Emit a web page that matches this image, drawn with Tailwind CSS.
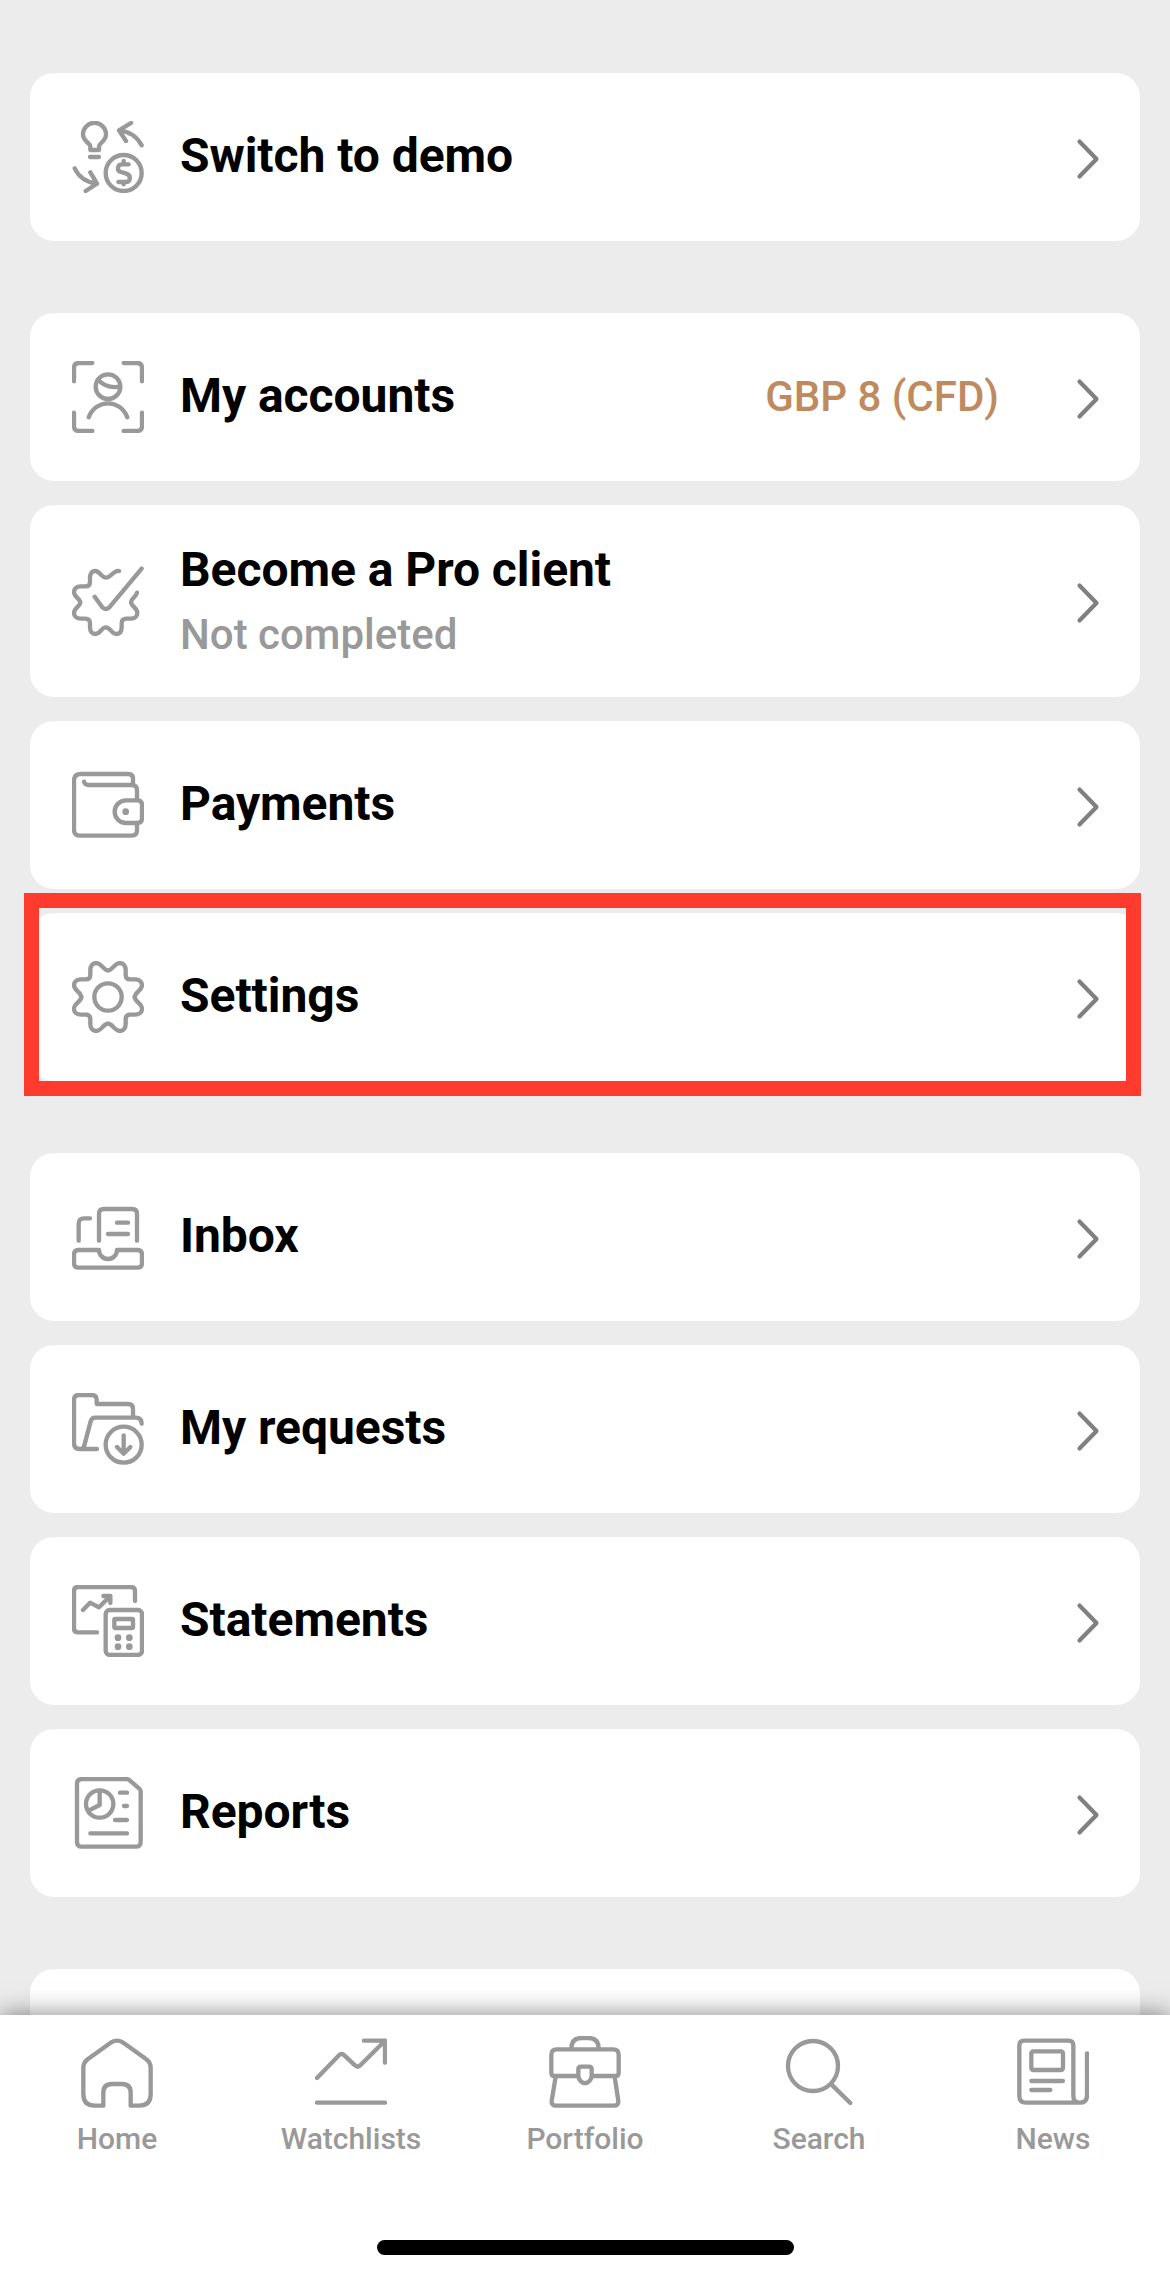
<!DOCTYPE html>
<html lang="en">
<head>
<meta charset="utf-8">
<title>Menu</title>
<script src="https://cdn.jsdelivr.net/npm/@tailwindcss/browser@4"></script>
</head>
<body class="bg-[#ececec]">
<svg class="hidden">
  <symbol id="chev" viewBox="0 0 24 42"><path d="M3.5 3.5 20.500 21 3.500 38.500" fill="none" stroke="#808080" stroke-width="4.200" stroke-linecap="round" stroke-linejoin="round"/></symbol>
</svg>
<div class="relative flex h-[2279px] w-[1170px] flex-col overflow-hidden font-['Roboto',sans-serif]">
  <main class="flex h-[2015px] shrink-0 flex-col overflow-hidden px-[30px] pt-[73px] text-[48px] leading-[56px] font-bold tracking-[-0.05px] text-black">

    <a class="flex h-[168px] shrink-0 items-center rounded-[24px] bg-white pr-[40px] pl-[42px]">
      <svg class="size-[72px] shrink-0 fill-none stroke-[#999] stroke-13" viewBox="0 0 216 216" stroke-linecap="round" stroke-linejoin="round"><path d="M55 87V76C55 66 33 62 33 40A34.500 34.500 0 0 1 102 40C102 62 81 66 81 76V87ZM54 108H81M177 6 141 28 162 60M141 28Q188 33 209 73M55 154 75 188 41 210M75 188Q28 183 8 142"/><circle cx="155" cy="156" r="54"/><path d="M170 130H152C134 130 134 149 147 153L161 157C180 163 176 183 160 183H139M155 120V130M155 183V190"/></svg>
      <span class="ml-[36px] flex-1 pb-[2px]">Switch to demo</span>
      <svg class="mt-[3px] h-[42px] w-[24px]"><use href="#chev"/></svg>
    </a>

    <a class="mt-[72px] flex h-[168px] shrink-0 items-center rounded-[24px] bg-white pr-[40px] pl-[42px]">
      <svg class="size-[72px] shrink-0 fill-none stroke-[#999] stroke-13" viewBox="0 0 216 216" stroke-linecap="round" stroke-linejoin="round"><path d="M61 6H21Q6 6 6 21V61M155 6H195Q210 6 210 21V61M6 155V195Q6 210 21 210H61M210 155V195Q210 210 195 210H155"/><circle cx="108" cy="77" r="37"/><path d="M78 56Q103 84 144 77M50 169C72 113 144 113 166 169"/></svg>
      <span class="ml-[36px] flex-1 pb-[2px]">My accounts</span>
      <span class="mr-[77px] text-[42px] font-medium tracking-normal text-[#bf8a60]">GBP 8 (CFD)</span>
      <svg class="mt-[3px] h-[42px] w-[24px]"><use href="#chev"/></svg>
    </a>

    <a class="mt-[24px] flex h-[192px] shrink-0 items-center rounded-[24px] bg-white pr-[40px] pl-[42px]">
      <svg class="size-[72px] shrink-0 fill-none stroke-[#999] stroke-13" viewBox="0 0 216 216" stroke-linecap="round" stroke-linejoin="round"><path d="M141 18C126 13 118 38 102 38C88 38 84 18 70 18C58 18 54 28 54 38V50Q54 64 40 64H26C13 64 6 72 6 82C6 96 25 102 25 112.500C25 123 6 129 6 143C6 153 14 161 26 161H40Q54 161 54 175V187C54 199 60 207 70 207C86 207 88 187 101 187C116 187 118 207 133 207C144 207 149 199 149 187V175Q149 161 163 161H177C189 161 196 153 196 143C196 129 177 123 177 112C177 100 192 96 195 83"/><path d="M68 95 91 127Q101 137 112 127L209 11"/></svg>
      <span class="ml-[36px] flex flex-1 flex-col">
        <span>Become a Pro client</span>
        <span class="mt-[12px] text-[42px] leading-[50px] font-medium tracking-normal text-[#999]">Not completed</span>
      </span>
      <svg class="mt-[3px] h-[42px] w-[24px]"><use href="#chev"/></svg>
    </a>

    <a class="mt-[24px] flex h-[168px] shrink-0 items-center rounded-[24px] bg-white pr-[40px] pl-[42px]">
      <svg class="size-[72px] shrink-0 fill-none stroke-[#999] stroke-13" viewBox="0 0 216 216" stroke-linecap="round" stroke-linejoin="round"><path d="M183 46V29Q183 15 169 15H26Q6 15 6 35V182Q6 200 24 200H179Q195 200 195 184V164M36 38Q38 48 50 48H179Q195 48 195 64V92M162 94H196Q210 94 210 108V148Q210 162 196 162H162A34 34 0 0 1 162 94Z"/><circle cx="161" cy="128" r="10" class="fill-[#999] stroke-none"/></svg>
      <span class="ml-[36px] flex-1 pb-[2px]">Payments</span>
      <svg class="mt-[3px] h-[42px] w-[24px]"><use href="#chev"/></svg>
    </a>

    <a class="relative mt-[24px] flex h-[168px] shrink-0 items-center rounded-[24px] bg-white pr-[40px] pl-[42px]">
      <svg class="size-[72px] shrink-0 fill-none stroke-[#999] stroke-13" viewBox="0 0 216 216" stroke-linecap="round" stroke-linejoin="round"><path id="q" d="M108 28C94 28 89 6 73 6C61 6 55 15 55 27V41Q55 55 41 55H27C15 55 6 61 6 73C6 89 28 94 28 108"/><use href="#q" transform="rotate(90 108 108)"/><use href="#q" transform="rotate(180 108 108)"/><use href="#q" transform="rotate(270 108 108)"/><circle cx="108" cy="108" r="41"/></svg>
      <span class="ml-[36px] flex-1 pb-[2px]">Settings</span>
      <svg class="mt-[3px] h-[42px] w-[24px]"><use href="#chev"/></svg>
      <span class="absolute -top-[20px] -left-[6px] h-[203px] w-[1117px] border-[15px] border-[#ff3b30]"></span>
    </a>

    <a class="mt-[72px] flex h-[168px] shrink-0 items-center rounded-[24px] bg-white pr-[40px] pl-[42px]">
      <svg class="size-[72px] shrink-0 fill-none stroke-[#999] stroke-13" viewBox="0 0 216 216" stroke-linecap="round" stroke-linejoin="round"><path d="M20 119V68Q20 52 36 52H54M81 119V39Q81 24 96 24H180Q195 24 195 39V119M135 65H168M108 99H168M20 147H81A27 27 0 0 0 135 147H196Q210 147 210 161V186Q210 200 196 200H20Q6 200 6 186V161Q6 147 20 147Z"/></svg>
      <span class="ml-[36px] flex-1 pb-[2px]">Inbox</span>
      <svg class="mt-[3px] h-[42px] w-[24px]"><use href="#chev"/></svg>
    </a>

    <a class="mt-[24px] flex h-[168px] shrink-0 items-center rounded-[24px] bg-white pr-[40px] pl-[42px]">
      <svg class="size-[72px] shrink-0 fill-none stroke-[#999] stroke-13" viewBox="0 0 216 216" stroke-linecap="round" stroke-linejoin="round"><path d="M75 168H24Q6 168 6 150V21Q6 6 21 6H59Q74 6 74 21V33H168Q183 33 183 48V72M24 168Q35 168 37 157L56 85Q59 74 70 74H191Q209 74 209 92"/><circle cx="155" cy="155" r="54"/><path d="M155 127V181M135 162 155 182 175 162"/></svg>
      <span class="ml-[36px] flex-1 pb-[2px]">My requests</span>
      <svg class="mt-[3px] h-[42px] w-[24px]"><use href="#chev"/></svg>
    </a>

    <a class="mt-[24px] flex h-[168px] shrink-0 items-center rounded-[24px] bg-white pr-[40px] pl-[42px]">
      <svg class="size-[72px] shrink-0 fill-none stroke-[#999] stroke-13" viewBox="0 0 216 216" stroke-linecap="round" stroke-linejoin="round"><path d="M75 142H18Q6 142 6 130V18Q6 6 18 6H177Q189 6 189 18V48M33 75 54 53 81 67 115 33M94 33H115V54"/><rect x="101" y="75" width="109" height="135" rx="12"/><rect x="127" y="102" width="56" height="27" rx="3"/><g class="fill-[#999] stroke-none"><circle cx="138" cy="158" r="10"/><circle cx="172" cy="158" r="10"/><circle cx="138" cy="185" r="10"/><circle cx="172" cy="185" r="10"/></g></svg>
      <span class="ml-[36px] flex-1 pb-[2px]">Statements</span>
      <svg class="mt-[3px] h-[42px] w-[24px]"><use href="#chev"/></svg>
    </a>

    <a class="mt-[24px] flex h-[168px] shrink-0 items-center rounded-[24px] bg-white pr-[40px] pl-[42px]">
      <svg class="size-[72px] shrink-0 fill-none stroke-[#999] stroke-13" viewBox="0 0 216 216" stroke-linecap="round" stroke-linejoin="round"><path d="M30 6H164Q169 6 173 10L202 35Q206 38 206 43V194Q206 209 191 209H30Q15 209 15 194V21Q15 6 30 6ZM144 47H165M156 87H165M129 129H165M55 169H165M83 42V84L50 101"/><circle cx="83" cy="81" r="41"/></svg>
      <span class="ml-[36px] flex-1 pb-[2px]">Reports</span>
      <svg class="mt-[3px] h-[42px] w-[24px]"><use href="#chev"/></svg>
    </a>

    <div class="mt-[72px] h-[168px] shrink-0 rounded-[24px] bg-white"></div>
  </main>

  <nav class="relative flex h-[264px] shrink-0 flex-col items-center bg-white text-[30px] leading-[36px] font-medium text-[#999] shadow-[0_0_24px_rgba(0,0,0,0.5)]">
    <div class="grid w-full grid-cols-5 pt-[21px]">
      <a class="flex flex-col items-center gap-[13px]">
        <svg class="size-[72px] fill-none stroke-[#999] stroke-13" viewBox="0 0 216 216" stroke-linecap="round" stroke-linejoin="round"><path d="M67 209V170Q67 144 93 144H123Q149 144 149 170V209H175Q209 209 209 175V96Q209 80 196 70L125 19Q108 9 91 19L20 70Q7 80 7 96V175Q7 209 41 209Z"/></svg>
        <span>Home</span>
      </a>
      <a class="flex flex-col items-center gap-[13px]">
        <svg class="size-[72px] fill-none stroke-[#999] stroke-13" viewBox="0 0 216 216" stroke-linecap="round" stroke-linejoin="round"><path d="M6 126 72 58Q80 50 88 58L120 88Q128 96 136 88L210 14M147 14H210V80M6 200H210"/></svg>
        <span>Watchlists</span>
      </a>
      <a class="flex flex-col items-center gap-[13px]">
        <svg class="size-[72px] fill-none stroke-[#999] stroke-13" viewBox="0 0 216 216" stroke-linecap="round" stroke-linejoin="round"><path d="M67 38Q67 6 97 6H119Q149 6 149 38M88 120H17Q7 120 7 110V56Q7 40 23 40H193Q209 40 209 56V110Q209 120 199 120H128M96 92H120Q128 92 128 100V121Q126 133 116 139Q108 144 100 139Q90 133 88 121V100Q88 92 96 92ZM20 122 8 195Q7 209 21 209H195Q209 209 208 195L197 122"/></svg>
        <span>Portfolio</span>
      </a>
      <a class="flex flex-col items-center gap-[13px]">
        <svg class="size-[72px] fill-none stroke-[#999] stroke-13" viewBox="0 0 216 216" stroke-linecap="round"><circle cx="90" cy="90" r="75"/><path d="M145 145 202 201"/></svg>
        <span>Search</span>
      </a>
      <a class="flex flex-col items-center gap-[13px]">
        <svg class="size-[72px] fill-none stroke-[#999] stroke-13" viewBox="0 0 216 216" stroke-linecap="round" stroke-linejoin="round"><path d="M189 200H27Q7 200 7 180V28Q7 14 21 14H155Q169 14 169 28V180Q169 200 189 200Q210 200 210 178V52M43 135H138M43 162H100"/><rect x="43" y="46" width="95" height="56" rx="6"/></svg>
        <span>News</span>
      </a>
    </div>
    <div class="mt-auto mb-[24px] h-[15px] w-[417px] rounded-full bg-black"></div>
  </nav>
</div>
</body>
</html>
